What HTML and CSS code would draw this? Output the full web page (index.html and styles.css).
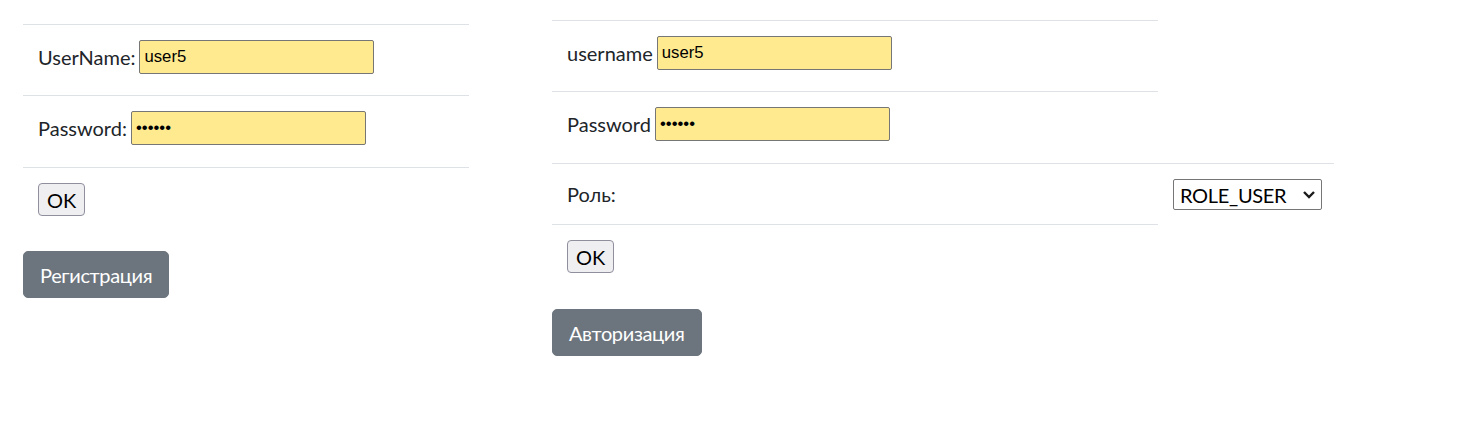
FILE: index.html
```html
<!DOCTYPE html>
<html lang="ru">
<head>
<meta charset="utf-8">
<title>Login</title>
<link rel="stylesheet" href="styles.css">
</head>
<body>
<div class="page">
  <section class="col col-left">
    <form class="form">
      <table class="tbl tbl-left">
        <tr><td><div class="field"><label class="lbl">UserName:</label><input class="inp" type="text" value="user5"></div></td></tr>
        <tr><td><div class="field field-b"><label class="lbl">Password:</label><input class="inp" type="password" value="123456"></div></td></tr>
        <tr><td><button class="ok" type="button">OK</button></td></tr>
      </table>
    </form>
    <a class="btn">Регистрация</a>
  </section>
  <section class="col col-right">
    <form class="form">
      <table class="tbl tbl-right">
        <colgroup><col class="c-main"><col class="c-side"></colgroup>
        <tr><td><div class="field"><label class="lbl">username</label><input class="inp" type="text" value="user5"></div></td></tr>
        <tr><td><div class="field field-b"><label class="lbl">Password</label><input class="inp" type="password" value="123456"></div></td></tr>
        <tr>
          <td><span class="role">Роль:</span></td>
          <td>
            <div class="sel-wrap">
              <select class="sel"><option>ROLE_USER</option><option>ROLE_ADMIN</option></select>
              <svg class="chev" width="14" height="9" viewBox="0 0 14 9"><polyline points="2,2 7,7 12,2" fill="none" stroke="#1b1b1b" stroke-width="2.4"/></svg>
            </div>
          </td>
        </tr>
        <tr><td><button class="ok" type="button">OK</button></td></tr>
      </table>
    </form>
    <a class="btn btn-right">Авторизация</a>
  </section>
</div>
</body>
</html>
```

FILE: styles.css
```css
html, body {
  margin: 0;
  padding: 0;
  background: #fff;
}
body {
  font-family: "Lato", "Noto Sans", sans-serif;
  font-size: 20px;
  line-height: 30px;
  color: #212529;
}
.page {
  display: flex;
  align-items: flex-start;
  gap: 83px;
  padding-left: 23px;
}
.col-left {
  width: 446px;
  padding-top: 24px;
}
.col-right {
  padding-top: 20px;
}
.form {
  margin: 0;
}
.tbl {
  border-collapse: collapse;
  margin-bottom: 20px;
}
.tbl-left {
  width: 446px;
}
.tbl-right {
  width: 782px;
  table-layout: fixed;
}
.c-main { width: 606px; }
.c-side { width: 176px; }
.tbl td {
  padding: 15px;
  border-top: 1px solid #dee2e6;
  vertical-align: top;
}
.field {
  display: flex;
  align-items: center;
  gap: 4px;
  height: 34px;
  margin-bottom: 6px;
}
.field-b {
  margin-bottom: 7px;
}
.lbl {
  line-height: 30px;
}
.inp {
  box-sizing: border-box;
  width: 235px;
  height: 34px;
  margin: 0;
  padding: 0 4px;
  border: 1px solid #767676;
  border-radius: 2px;
  background: #ffea90;
  font-family: "Liberation Sans", Arial, sans-serif;
  font-size: 16.7px;
  color: #000;
  outline: none;
}
.role {
  display: block;
  line-height: 30px;
}
.sel-wrap {
  position: relative;
  width: 149px;
  height: 30px;
}
.sel {
  appearance: none;
  -webkit-appearance: none;
  box-sizing: border-box;
  display: block;
  width: 149px;
  height: 31px;
  margin: 0;
  padding: 0 0 0 6px;
  border: 1px solid #767676;
  border-radius: 2px;
  background: #fff;
  font-family: "Lato", "Noto Sans", sans-serif;
  font-size: 20px;
  letter-spacing: -0.3px;
  color: #000;
}
.chev {
  position: absolute;
  right: 6px;
  top: 11px;
  pointer-events: none;
}
.ok {
  box-sizing: border-box;
  height: 33px;
  margin: 0;
  padding: 0 8px;
  border: 1px solid #8f8f9d;
  border-radius: 4px;
  background: #efeff1;
  font-family: "Lato", "Noto Sans", sans-serif;
  font-size: 20px;
  color: #000;
}
.btn {
  display: inline-block;
  padding: 7.5px 16px;
  line-height: 30px;
  border: 1px solid #6c757d;
  border-radius: 5px;
  background: #6c757d;
  color: #fff;
  font-size: 20px;
  letter-spacing: -0.35px;
}
.btn-right {
  margin-top: 1px;
}
```
